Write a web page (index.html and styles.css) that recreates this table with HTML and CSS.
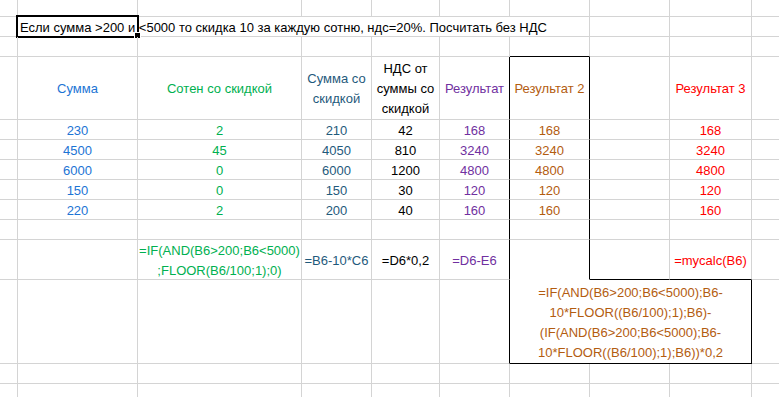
FILE: index.html
```html
<!DOCTYPE html>
<html lang="ru">
<head>
<meta charset="utf-8">
<title>Excel</title>
<link rel="stylesheet" href="styles.css">
</head>
<body>
<div class="sheet">
  <!-- row 1 -->
  <div class="c"></div><div class="c"></div><div class="c"></div><div class="c"></div><div class="c"></div><div class="c"></div><div class="c"></div><div class="c"></div><div class="c"></div><div class="c lastcol"></div>
  <!-- row 2 -->
  <div class="c"></div>
  <div class="c span6 left"><span class="task">Если сумма &gt;200 и &lt;5000 то скидка 10 за каждую сотню, ндс=20%. Посчитать без НДС</span><div class="sel"><div class="handle"></div></div></div>
  <div class="c"></div><div class="c"></div><div class="c lastcol"></div>
  <!-- row 3 -->
  <div class="c"></div><div class="c"></div><div class="c"></div><div class="c"></div><div class="c"></div><div class="c"></div><div class="c btop"></div><div class="c"></div><div class="c"></div><div class="c lastcol"></div>
  <!-- row 4 header -->
  <div class="c"></div>
  <div class="c blue">Сумма</div>
  <div class="c green">Сотен со скидкой</div>
  <div class="c teal">Сумма со<br>скидкой</div>
  <div class="c black">НДС от<br>суммы со<br>скидкой</div>
  <div class="c purple bright">Результат</div>
  <div class="c brown bright">Результат 2</div>
  <div class="c"></div>
  <div class="c red">Результат 3</div>
  <div class="c lastcol"></div>
  <!-- row 5 -->
  <div class="c"></div><div class="c blue">230</div><div class="c green">2</div><div class="c teal">210</div><div class="c black">42</div><div class="c purple bright">168</div><div class="c brown bright">168</div><div class="c"></div><div class="c red">168</div><div class="c lastcol"></div>
  <!-- row 6 -->
  <div class="c"></div><div class="c blue">4500</div><div class="c green">45</div><div class="c teal">4050</div><div class="c black">810</div><div class="c purple bright">3240</div><div class="c brown bright">3240</div><div class="c"></div><div class="c red">3240</div><div class="c lastcol"></div>
  <!-- row 7 -->
  <div class="c"></div><div class="c blue">6000</div><div class="c green">0</div><div class="c teal">6000</div><div class="c black">1200</div><div class="c purple bright">4800</div><div class="c brown bright">4800</div><div class="c"></div><div class="c red">4800</div><div class="c lastcol"></div>
  <!-- row 8 -->
  <div class="c"></div><div class="c blue">150</div><div class="c green">0</div><div class="c teal">150</div><div class="c black">30</div><div class="c purple bright">120</div><div class="c brown bright">120</div><div class="c"></div><div class="c red">120</div><div class="c lastcol"></div>
  <!-- row 9 -->
  <div class="c"></div><div class="c blue">220</div><div class="c green">2</div><div class="c teal">200</div><div class="c black">40</div><div class="c purple bright">160</div><div class="c brown bright">160</div><div class="c"></div><div class="c red">160</div><div class="c lastcol"></div>
  <!-- row 10 -->
  <div class="c"></div><div class="c"></div><div class="c"></div><div class="c"></div><div class="c"></div><div class="c bright"></div><div class="c bright"></div><div class="c"></div><div class="c"></div><div class="c lastcol"></div>
  <!-- row 11 formulas -->
  <div class="c"></div>
  <div class="c"></div>
  <div class="c green">=IF(AND(B6&gt;200;B6&lt;5000)<br>;FLOOR(B6/100;1);0)</div>
  <div class="c teal">=B6-10*C6</div>
  <div class="c black">=D6*0,2</div>
  <div class="c purple bright">=D6-E6</div>
  <div class="c bright nobottom"></div>
  <div class="c bbottom"></div>
  <div class="c red bbottom">=mycalc(B6)</div>
  <div class="c lastcol"></div>
  <!-- row 12 -->
  <div class="c"></div><div class="c"></div><div class="c"></div><div class="c"></div><div class="c"></div><div class="c bright"></div>
  <div class="c span3 brown boxed">=IF(AND(B6&gt;200;B6&lt;5000);B6-<br>10*FLOOR((B6/100);1);B6)-<br>(IF(AND(B6&gt;200;B6&lt;5000);B6-<br>10*FLOOR((B6/100);1);B6))*0,2</div>
  <div class="c lastcol"></div>
  <!-- row 13 -->
  <div class="c"></div><div class="c"></div><div class="c"></div><div class="c"></div><div class="c"></div><div class="c"></div><div class="c"></div><div class="c"></div><div class="c"></div><div class="c lastcol"></div>
  <!-- row 14 -->
  <div class="c lastrow"></div><div class="c lastrow"></div><div class="c lastrow"></div><div class="c lastrow"></div><div class="c lastrow"></div><div class="c lastrow"></div><div class="c lastrow"></div><div class="c lastrow"></div><div class="c lastrow"></div><div class="c lastcol lastrow"></div>
</div>
</body>
</html>
```
FILE: styles.css
```css
html, body {
  margin: 0;
  padding: 0;
  background: #ffffff;
}

.sheet {
  width: 779px;
  height: 397px;
  overflow: hidden;
  display: grid;
  grid-template-columns: 18px 120px 164px 70px 68px 70px 80px 80px 82px 27px;
  grid-template-rows: 17px 20px 20px 63px 20px 20px 20px 20px 20px 20px 40px 84px 20px 13px;
  font-family: "Liberation Sans", Arial, sans-serif;
  font-size: 13px;
  line-height: 20px;
  color: #000;
}

.c {
  box-sizing: border-box;
  border-right: 1px solid #d4d4d4;
  border-bottom: 1px solid #d4d4d4;
  display: flex;
  align-items: center;
  justify-content: center;
  text-align: center;
  white-space: nowrap;
  padding-top: 2px;
  position: relative;
}

.lastcol { border-right: none; }
.lastrow { border-bottom: none; }

.span6 { grid-column: span 6; }
.span3 { grid-column: span 3; }

.left {
  justify-content: flex-start;
  padding-left: 2px;
}

.blue { color: #1c74d4; }
.green { color: #00b050; }
.teal { color: #1f5a7c; }
.black { color: #000000; }
.purple { color: #7030a0; }
.brown { color: #b35c10; }
.red { color: #ff0000; }

.bright { border-right-color: #000; }
.btop { border-bottom-color: #000; }
.bbottom { border-bottom-color: #000; }
.nobottom { border-bottom-color: #ffffff; }
.boxed {
  border-right-color: #000;
  border-bottom-color: #000;
}

.sel {
  position: absolute;
  left: -2px;
  top: -2px;
  width: 123px;
  height: 23px;
  box-sizing: border-box;
  border: 2px solid #000;
}

.handle {
  position: absolute;
  left: 116px;
  top: 15px;
  width: 5px;
  height: 5px;
  background: #000;
  border: 1px solid #fff;
}
```
